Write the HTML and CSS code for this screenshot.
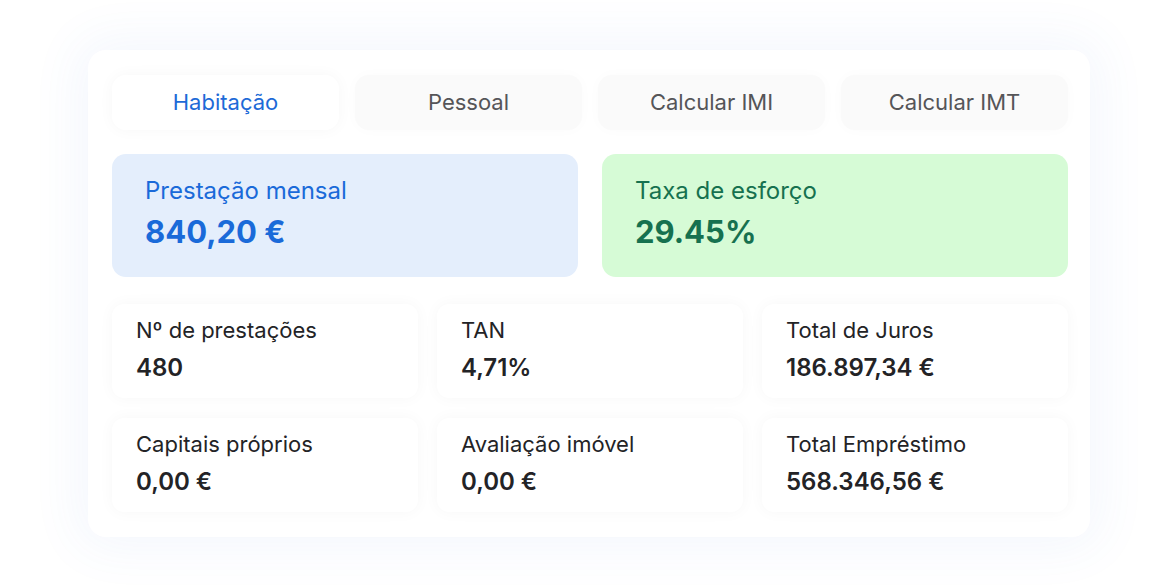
FILE: index.html
```html
<!DOCTYPE html>
<html lang="pt">
<head>
<meta charset="utf-8">
<link rel="stylesheet" href="styles.css">
</head>
<body>
<main class="stage">
  <section class="card">
    <nav class="tabs">
      <div class="tab active">Habitação</div>
      <div class="tab">Pessoal</div>
      <div class="tab">Calcular IMI</div>
      <div class="tab">Calcular IMT</div>
    </nav>
    <div class="summary">
      <div class="sum blue">
        <div class="sum-label">Prestação mensal</div>
        <div class="sum-value">840,20 €</div>
      </div>
      <div class="sum green">
        <div class="sum-label">Taxa de esforço</div>
        <div class="sum-value">29.45%</div>
      </div>
    </div>
    <div class="stats">
      <div class="stat"><div class="stat-label">Nº de prestações</div><div class="stat-value">480</div></div>
      <div class="stat"><div class="stat-label">TAN</div><div class="stat-value">4,71%</div></div>
      <div class="stat"><div class="stat-label">Total de Juros</div><div class="stat-value">186.897,34 €</div></div>
      <div class="stat"><div class="stat-label">Capitais próprios</div><div class="stat-value">0,00 €</div></div>
      <div class="stat"><div class="stat-label">Avaliação imóvel</div><div class="stat-value">0,00 €</div></div>
      <div class="stat"><div class="stat-label">Total Empréstimo</div><div class="stat-value">568.346,56 €</div></div>
    </div>
  </section>
</main>
</body>
</html>
```
FILE: styles.css
```css
* { box-sizing: border-box; }
html, body { margin: 0; padding: 0; }
body {
  background: #ffffff;
  font-family: Inter, "Noto Sans", sans-serif;
  width: 1176px;
  height: 588px;
  overflow: hidden;
}
.stage {
  padding: 50px 0 0 88px;
}
.card {
  width: 1002px;
  height: 487px;
  background: #ffffff;
  border-radius: 18px;
  box-shadow: 0 0 50px 12px rgba(70, 120, 220, 0.06);
  padding: 25px 22px 25px 24px;
}
.tabs {
  display: grid;
  grid-template-columns: repeat(4, 1fr);
  gap: 16px;
  height: 55px;
}
.tab {
  display: flex;
  align-items: center;
  justify-content: center;
  font-size: 22px;
  color: #555558;
  background: #fafafa;
  border-radius: 14px;
  padding-bottom: 2px;
  box-shadow: 0 0 14px rgba(0, 0, 0, 0.018);
}
.tab.active {
  background: #ffffff;
  color: #1d6ad7;
  box-shadow: 0 0 16px rgba(0, 0, 0, 0.035);
}
.summary {
  display: grid;
  grid-template-columns: 1fr 1fr;
  gap: 24px;
  margin-top: 24px;
  height: 123px;
}
.sum {
  border-radius: 14px;
  padding: 22px 32px 0 33px;
}
.sum.blue { background: #e4eefc; color: #1a6ad9; }
.sum.green { background: #d6fbd6; color: #16714f; }
.sum-label {
  font-size: 24px;
  line-height: 30px;
}
.sum-value {
  font-size: 31px;
  font-weight: 700;
  line-height: 40px;
  margin-top: 6px;
}
.stats {
  display: grid;
  grid-template-columns: repeat(3, 1fr);
  grid-auto-rows: 94px;
  column-gap: 19px;
  row-gap: 20px;
  margin-top: 27px;
}
.stat {
  background: #ffffff;
  border-radius: 12px;
  box-shadow: 0 0 16px rgba(0, 0, 0, 0.035);
  padding: 12px 24px 0 24px;
  color: #232326;
}
.stat-label {
  font-size: 22px;
  line-height: 28px;
}
.stat-value {
  font-size: 24px;
  font-weight: 600;
  line-height: 30px;
  margin-top: 9px;
}
```
